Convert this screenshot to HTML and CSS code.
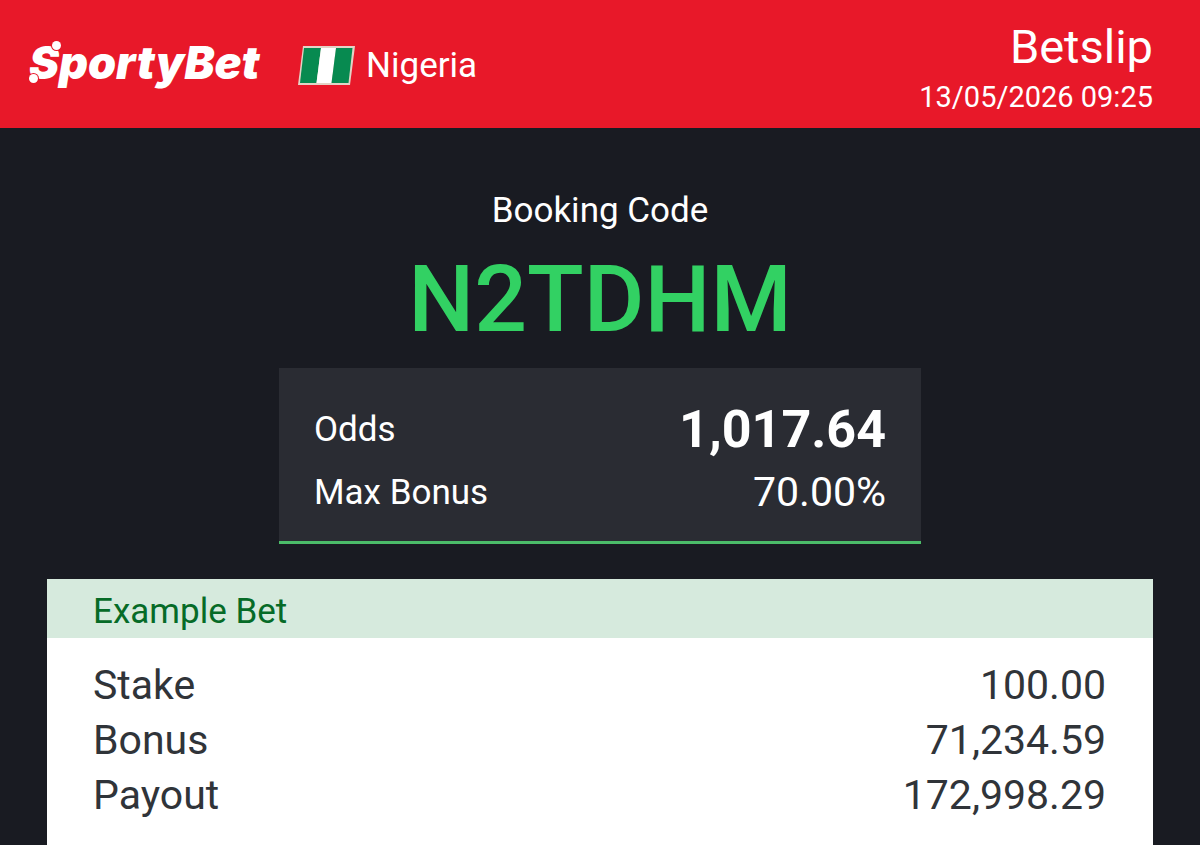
FILE: index.html
```
<!DOCTYPE html>
<html lang="en">
<head>
<meta charset="utf-8">
<meta name="viewport" content="width=device-width, initial-scale=1">
<title>SportyBet Betslip</title>
<link rel="stylesheet" href="styles.css">
</head>
<body>
<header class="topbar">
  <div class="brand">
    <span class="logo">SportyBet</span>
    <svg class="flag" viewBox="0 0 57 39" aria-hidden="true">
      <path d="M5 0H57L52 39H0Z" fill="#e3d3c6"/>
      <path d="M6 2H23L18.500 37H2Z" fill="#078a50"/>
      <path d="M23 2H38L33.500 37H18.500Z" fill="#fff"/>
      <path d="M38 2H54.500L50.500 37H33.500Z" fill="#078a50"/>
    </svg>
    <span class="country">Nigeria</span>
  </div>
  <div class="slip">
    <h1 class="slip-title">Betslip</h1>
    <time class="slip-time" datetime="2026-05-13T09:25">13/05/2026 09:25</time>
  </div>
</header>
<main class="content">
  <p class="code-label">Booking Code</p>
  <p class="code">N2TDHM</p>
  <dl class="summary">
    <div class="summary-row">
      <dt>Odds</dt>
      <dd class="odds">1,017.64</dd>
    </div>
    <div class="summary-row">
      <dt>Max Bonus</dt>
      <dd class="bonus">70.00%</dd>
    </div>
  </dl>
  <section class="example">
    <h2 class="example-title">Example Bet</h2>
    <dl class="example-list">
      <div class="example-row"><dt>Stake</dt><dd>100.00</dd></div>
      <div class="example-row"><dt>Bonus</dt><dd>71,234.59</dd></div>
      <div class="example-row"><dt>Payout</dt><dd>172,998.29</dd></div>
    </dl>
  </section>
</main>
</body>
</html>
```
FILE: styles.css
```
* {
  box-sizing: border-box;
}

body,
h1,
h2,
p,
dl,
dd {
  margin: 0;
}

body {
  display: flex;
  flex-direction: column;
  min-height: 100vh;
  background: #191b22;
  color: #fff;
  font-family: Roboto, "Liberation Sans", sans-serif;
}

.topbar {
  display: flex;
  align-items: center;
  justify-content: space-between;
  padding: 19px 47px 9px 28px;
  background: #e81829;
}

.brand {
  display: flex;
  align-items: center;
  padding-bottom: 8px;
}

.logo {
  position: relative;
  min-width: 232px;
  padding: 0 0 4px 1px;
  font: italic 900 45px/56px Inter, "Open Sans", sans-serif;
}

.logo::before,
.logo::after {
  content: "";
  position: absolute;
  width: 9px;
  height: 9px;
  border-radius: 50%;
  background: #fff;
  box-shadow: 0 0 0 1px #e81829;
}

.logo::before {
  left: 24px;
  top: 6px;
}

.logo::after {
  left: 1px;
  top: 39px;
}

.flag {
  width: 57px;
  height: 39px;
  margin-left: 38px;
}

.country {
  margin-left: 11px;
  padding-top: 2px;
  font-size: 35px;
  line-height: 40px;
}

.slip {
  text-align: right;
}

.slip-title {
  font-size: 47px;
  font-weight: 400;
  line-height: 56px;
}

.slip-time {
  display: block;
  font-size: 29px;
  line-height: 44px;
}

.content {
  display: flex;
  flex: 1;
  flex-direction: column;
  align-items: center;
  padding: 63px 47px 0;
}

.code-label {
  font-size: 35px;
  line-height: 40px;
}

.code {
  margin: 13px 0 12px;
  color: #32d163;
  font-size: 93px;
  font-weight: 500;
  line-height: 112px;
}

.summary {
  width: 100%;
  max-width: 642px;
  padding: 30px 35px 17px;
  border-bottom: 3px solid #4bbc69;
  background: #2a2c33;
}

.summary-row {
  display: flex;
  align-items: center;
  justify-content: space-between;
  line-height: 63px;
}

.summary dt {
  font-size: 35px;
}

.odds {
  font-size: 52px;
  font-weight: 700;
}

.bonus {
  font-size: 41px;
}

.example {
  flex: 1;
  width: 100%;
  margin-top: 35px;
  background: #fff;
  color: #303439;
}

.example-title {
  padding: 12px 47px 6px 46px;
  background: #d6eadd;
  color: #066b27;
  font-size: 35px;
  font-weight: 400;
  line-height: 41px;
}

.example-list {
  padding: 20px 47px 20px 46px;
}

.example-row {
  display: flex;
  justify-content: space-between;
  font-size: 41px;
  line-height: 55px;
}
```
